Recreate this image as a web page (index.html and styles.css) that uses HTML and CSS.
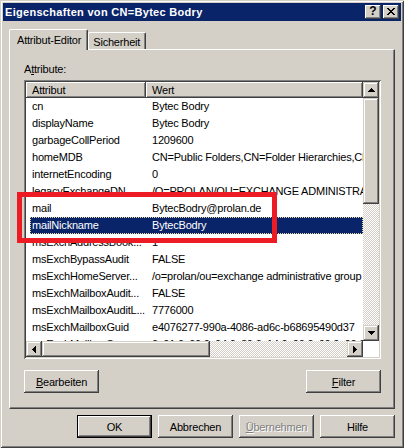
FILE: index.html
```html
<!DOCTYPE html>
<html>
<head>
<meta charset="utf-8">
<link rel="stylesheet" href="styles.css">
</head>
<body>
<div class="window">
  <div class="titlebar">
    <span class="title">Eigenschaften von CN=Bytec Bodry</span>
    <div class="tb-buttons">
      <div class="tb-btn help">?</div>
      <div class="tb-btn">
        <svg width="8" height="7" viewBox="0 0 8 7" shape-rendering="crispEdges"><path d="M0 0h2v1h-2zM6 0h2v1h-2zM1 1h2v1h-2zM5 1h2v1h-2zM2 2h4v1h-4zM3 3h2v1h-2zM2 4h4v1h-4zM1 5h2v1h-2zM5 5h2v1h-2zM0 6h2v1h-2zM6 6h2v1h-2z" fill="#000"/></svg>
      </div>
    </div>
  </div>
  <div class="client">
    <div class="tabs">
      <div class="tab sel">Attribut-Editor</div>
      <div class="tab">Sicherheit</div>
    </div>
    <div class="panel">
      <div class="label">A<u>t</u>tribute:</div>
      <div class="list">
        <div class="list-content">
          <div class="header">
            <div class="hcell c1">Attribut</div>
            <div class="hcell c2">Wert</div>
          </div>
          <div class="rows">
            <div class="row"><span class="a">cn</span><span class="v">Bytec Bodry</span></div>
            <div class="row"><span class="a">displayName</span><span class="v">Bytec Bodry</span></div>
            <div class="row"><span class="a">garbageCollPeriod</span><span class="v">1209600</span></div>
            <div class="row"><span class="a">homeMDB</span><span class="v">CN=Public Folders,CN=Folder Hierarchies,CN=Exchange</span></div>
            <div class="row"><span class="a">internetEncoding</span><span class="v">0</span></div>
            <div class="row"><span class="a">legacyExchangeDN</span><span class="v">/O=PROLAN/OU=EXCHANGE ADMINISTRATIVE GROUP</span></div>
            <div class="row"><span class="a">mail</span><span class="v">BytecBodry@prolan.de</span></div>
            <div class="row selected"><span class="a">mailNickname</span><span class="v">BytecBodry</span></div>
            <div class="row"><span class="a">msExchAddressBook...</span><span class="v">1</span></div>
            <div class="row"><span class="a">msExchBypassAudit</span><span class="v">FALSE</span></div>
            <div class="row"><span class="a">msExchHomeServer...</span><span class="v">/o=prolan/ou=exchange administrative group (FYDIBOHF23SPDLT)</span></div>
            <div class="row"><span class="a">msExchMailboxAudit...</span><span class="v">FALSE</span></div>
            <div class="row"><span class="a">msExchMailboxAuditL...</span><span class="v">7776000</span></div>
            <div class="row"><span class="a">msExchMailboxGuid</span><span class="v">e4076277-990a-4086-ad6c-b68695490d37</span></div>
            <div class="row"><span class="a">msExchMailboxSecu...</span><span class="v">0x01 0x00 0x04 0x80 0x14 0x00 0x00 0x00 0x20</span></div>
          </div>
        </div>
        <div class="vscroll">
          <div class="sbtn"><svg width="7" height="4" viewBox="0 0 7 4" shape-rendering="crispEdges"><path d="M3 0h1v1h-1zM2 1h3v1h-3zM1 2h5v1h-5zM0 3h7v1h-7z" fill="#000"/></svg></div>
          <div class="thumb v"></div>
          <div class="track"></div>
          <div class="sbtn"><svg width="7" height="4" viewBox="0 0 7 4" shape-rendering="crispEdges"><path d="M0 0h7v1h-7zM1 1h5v1h-5zM2 2h3v1h-3zM3 3h1v1h-1z" fill="#000"/></svg></div>
        </div>
        <div class="hscroll">
          <div class="sbtn"><svg width="4" height="7" viewBox="0 0 4 7" shape-rendering="crispEdges"><path d="M3 0h1v7h-1zM2 1h1v5h-1zM1 2h1v3h-1zM0 3h1v1h-1z" fill="#000"/></svg></div>
          <div class="thumb h"></div>
          <div class="track"></div>
          <div class="sbtn"><svg width="4" height="7" viewBox="0 0 4 7" shape-rendering="crispEdges"><path d="M0 0h1v7h-1zM1 1h1v5h-1zM2 2h1v3h-1zM3 3h1v1h-1z" fill="#000"/></svg></div>
        </div>
        <div class="corner"></div>
      </div>
      <div class="panel-buttons">
        <div class="btn"><u>B</u>earbeiten</div>
        <div class="btn"><u>F</u>ilter</div>
      </div>
    </div>
    <div class="dialog-buttons">
      <div class="btn default">OK</div>
      <div class="btn">Abbrechen</div>
      <div class="btn disabled"><u>Ü</u>bernehmen</div>
      <div class="btn">Hilfe</div>
    </div>
  </div>
  <div class="highlight"></div>
</div>
</body>
</html>
```
FILE: styles.css
```css
* { box-sizing: border-box; }
html, body { margin: 0; padding: 0; }
body {
  width: 404px;
  height: 448px;
  overflow: hidden;
  background: #d4d0c8;
  font-family: "Liberation Sans", Arial, sans-serif;
  font-size: 11px;
  letter-spacing: -0.2px;
  color: #000;
}
.window {
  position: relative;
  width: 404px;
  height: 448px;
  padding: 3px;
  background: #d4d0c8;
  box-shadow: inset 1px 1px #d4d0c8, inset -1px -1px #404040, inset 2px 2px #fff, inset -2px -2px #808080;
  display: flex;
  flex-direction: column;
}
.titlebar {
  height: 18px;
  background: #0a246a;
  display: flex;
  align-items: center;
  justify-content: space-between;
  padding: 0 2px 0 2px;
}
.title {
  color: #fff;
  font-weight: bold;
  font-size: 11px;
  letter-spacing: 0.3px;
  white-space: nowrap;
}
.tb-buttons { display: flex; gap: 2px; }
.tb-btn {
  width: 16px;
  height: 14px;
  background: #d4d0c8;
  box-shadow: inset -1px -1px #404040, inset 1px 1px #fff, inset -2px -2px #808080;
  display: flex;
  align-items: center;
  justify-content: center;
  padding-bottom: 1px;
}
.tb-btn.help {
  font-weight: bold;
  font-size: 12px;
  letter-spacing: 0;
  line-height: 13px;
  padding: 0 0 1px 0;
}
.client {
  flex: 1;
  padding: 8px 6px 0 6px;
  display: flex;
  flex-direction: column;
}
.tabs {
  height: 20px;
  display: flex;
  align-items: flex-end;
}
.tab {
  position: relative;
  height: 17px;
  padding: 2px 5px 0 4px;
  line-height: 14px;
  border-left: 1px solid #fff;
  border-top: 1px solid #fff;
  border-right: 1px solid #404040;
  border-top-left-radius: 2px;
  border-top-right-radius: 2px;
  box-shadow: inset -1px 0 #808080;
  white-space: nowrap;
}
.tab.sel {
  z-index: 2;
  height: 21px;
  margin-bottom: -1px;
  padding: 2px 6px 0 7px;
  line-height: 16px;
  background: #d4d0c8;
}
.panel {
  height: 360px;
  border-left: 1px solid #fff;
  border-top: 1px solid #fff;
  border-right: 1px solid #404040;
  border-bottom: 1px solid #404040;
  box-shadow: inset -1px -1px #808080;
  padding: 13px 13px 14px 14px;
  display: flex;
  flex-direction: column;
}
.label {
  height: 13px;
  line-height: 13px;
  margin-bottom: 4px;
}
.list {
  height: 279px;
  padding: 2px;
  background: #fff;
  box-shadow: inset 1px 1px #808080, inset -1px -1px #fff, inset 2px 2px #404040, inset -2px -2px #d4d0c8;
  display: grid;
  grid-template-columns: 337px 16px;
  grid-template-rows: 259px 16px;
}
.list-content {
  overflow: hidden;
  display: flex;
  flex-direction: column;
}
.header { display: flex; height: 16px; flex: none; }
.hcell {
  height: 16px;
  line-height: 16px;
  padding-left: 6px;
  background: #d4d0c8;
  box-shadow: inset -1px -1px #404040, inset 1px 1px #fff, inset -2px -2px #808080;
  white-space: nowrap;
}
.hcell.c1 { width: 120px; flex: none; }
.hcell.c2 { width: 217px; flex: none; }
.rows { display: flex; flex-direction: column; }
.row {
  height: 17px;
  line-height: 17px;
  margin-left: 4px;
  display: flex;
  white-space: nowrap;
  flex: none;
}
.row .a { width: 116px; flex: none; padding-left: 2px; overflow: hidden; }
.row .v { padding-left: 6px; flex: none; }
.row.selected {
  background: #0a246a;
  color: #fff;
  outline: 1px dotted #e8d8a0;
  outline-offset: -1px;
}
.vscroll, .hscroll { display: flex; background: #d4d0c8; }
.vscroll { flex-direction: column; }
.sbtn {
  width: 16px;
  height: 16px;
  flex: none;
  background: #d4d0c8;
  box-shadow: inset -1px -1px #404040, inset 1px 1px #d4d0c8, inset -2px -2px #808080, inset 2px 2px #fff;
  display: flex;
  align-items: center;
  justify-content: center;
}
.thumb {
  flex: none;
  background: #d4d0c8;
  box-shadow: inset -1px -1px #404040, inset 1px 1px #d4d0c8, inset -2px -2px #808080, inset 2px 2px #fff;
}
.thumb.v { height: 106px; }
.thumb.h { width: 168px; }
.track {
  flex: 1;
  background: repeating-conic-gradient(#fff 0 25%, #d4d0c8 0 50%) 0 0 / 2px 2px;
}
.corner { background: #fff; }
.panel-buttons {
  margin-top: 11px;
  display: flex;
  justify-content: space-between;
}
.btn {
  width: 75px;
  height: 23px;
  background: #d4d0c8;
  box-shadow: inset -1px -1px #404040, inset 1px 1px #fff, inset -2px -2px #808080;
  display: flex;
  align-items: center;
  justify-content: center;
  white-space: nowrap;
}
.btn.default {
  box-shadow: inset 0 0 0 1px #000, inset -2px -2px #404040, inset 2px 2px #fff, inset -3px -3px #808080;
}
.btn.disabled {
  color: #808080;
  text-shadow: 1px 1px #fff;
}
.dialog-buttons {
  margin-top: 6px;
  display: flex;
  justify-content: flex-end;
  gap: 6px;
}
.highlight {
  position: absolute;
  left: 17px;
  top: 192px;
  width: 260px;
  height: 51px;
  border: 5px solid #ed1c24;
  pointer-events: none;
}
```
